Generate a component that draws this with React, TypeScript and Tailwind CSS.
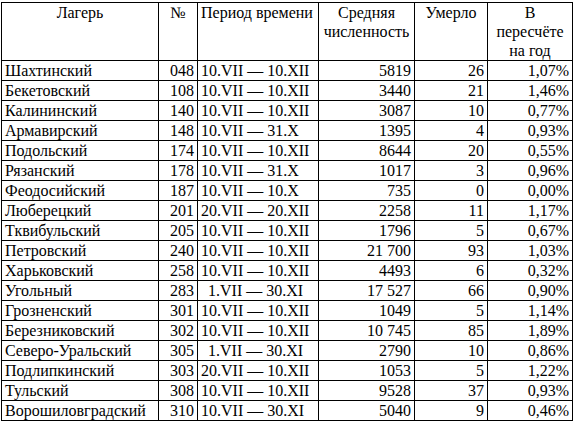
import React from "react";

type Row = {
  camp: string;
  no: string;
  period: string;
  avg: string;
  died: number;
  rate: string;
};

const rows: Row[] = [
  { camp: "Шахтинский", no: "048", period: "10.VII — 10.XII", avg: "5819", died: 26, rate: "1,07%" },
  { camp: "Бекетовский", no: "108", period: "10.VII — 10.XII", avg: "3440", died: 21, rate: "1,46%" },
  { camp: "Калининский", no: "140", period: "10.VII — 10.XII", avg: "3087", died: 10, rate: "0,77%" },
  { camp: "Армавирский", no: "148", period: "10.VII — 31.X", avg: "1395", died: 4, rate: "0,93%" },
  { camp: "Подольский", no: "174", period: "10.VII — 10.XII", avg: "8644", died: 20, rate: "0,55%" },
  { camp: "Рязанский", no: "178", period: "10.VII — 31.X", avg: "1017", died: 3, rate: "0,96%" },
  { camp: "Феодосийский", no: "187", period: "10.VII — 10.X", avg: "735", died: 0, rate: "0,00%" },
  { camp: "Люберецкий", no: "201", period: "20.VII — 20.XII", avg: "2258", died: 11, rate: "1,17%" },
  { camp: "Тквибульский", no: "205", period: "10.VII — 10.XII", avg: "1796", died: 5, rate: "0,67%" },
  { camp: "Петровский", no: "240", period: "10.VII — 10.XII", avg: "21 700", died: 93, rate: "1,03%" },
  { camp: "Харьковский", no: "258", period: "10.VII — 10.XII", avg: "4493", died: 6, rate: "0,32%" },
  { camp: "Угольный", no: "283", period: "1.VII — 30.XI", avg: "17 527", died: 66, rate: "0,90%" },
  { camp: "Грозненский", no: "301", period: "10.VII — 10.XII", avg: "1049", died: 5, rate: "1,14%" },
  { camp: "Березниковский", no: "302", period: "10.VII — 10.XII", avg: "10 745", died: 85, rate: "1,89%" },
  { camp: "Северо-Уральский", no: "305", period: "1.VII — 30.XI", avg: "2790", died: 10, rate: "0,86%" },
  { camp: "Подлипкинский", no: "303", period: "20.VII — 10.XII", avg: "1053", died: 5, rate: "1,22%" },
  { camp: "Тульский", no: "308", period: "10.VII — 10.XII", avg: "9528", died: 37, rate: "0,93%" },
  { camp: "Ворошиловградский", no: "310", period: "10.VII — 30.XI", avg: "5040", died: 9, rate: "0,46%" },
];

const cell = "border border-black px-[3px] leading-[19px] whitespace-nowrap";

export default function App() {
  return (
    <div className="w-[573px] h-[423px] bg-white pt-[2px] pl-[1px] text-black font-['Liberation_Serif',serif] text-[16px]">
      <table className="table-fixed border-collapse w-[571px]">
        <colgroup>
          <col className="w-[157px]" />
          <col className="w-[39px]" />
          <col className="w-[121px]" />
          <col className="w-[96px]" />
          <col className="w-[73px]" />
          <col className="w-[85px]" />
        </colgroup>
        <thead>
          {/* header row is three lines tall */}
          <tr className="h-[57px] align-top">
            <th className={`${cell} font-normal text-center`}>Лагерь</th>
            <th className={`${cell} font-normal text-center`}>№</th>
            <th className={`${cell} font-normal text-left`}>Период времени</th>
            <th className={`${cell} font-normal text-center whitespace-normal`}>
              Средняя
              <br />
              численность
            </th>
            <th className={`${cell} font-normal text-center`}>Умерло</th>
            <th className={`${cell} font-normal text-center whitespace-normal`}>
              В
              <br />
              пересчёте
              <br />
              на год
            </th>
          </tr>
        </thead>
        <tbody>
          {rows.map((r) => (
            <tr key={r.no} className="h-[19.9px] align-bottom">
              <td className={`${cell} text-left`}>{r.camp}</td>
              <td className={`${cell} text-right`}>{r.no}</td>
              <td className={`${cell} text-left ${r.period.startsWith("1.") ? "pl-[10px]" : ""}`}>
                {r.period}
              </td>
              <td className={`${cell} text-right`}>{r.avg}</td>
              <td className={`${cell} text-right`}>{r.died}</td>
              <td className={`${cell} text-right`}>{r.rate}</td>
            </tr>
          ))}
        </tbody>
      </table>
    </div>
  );
}
